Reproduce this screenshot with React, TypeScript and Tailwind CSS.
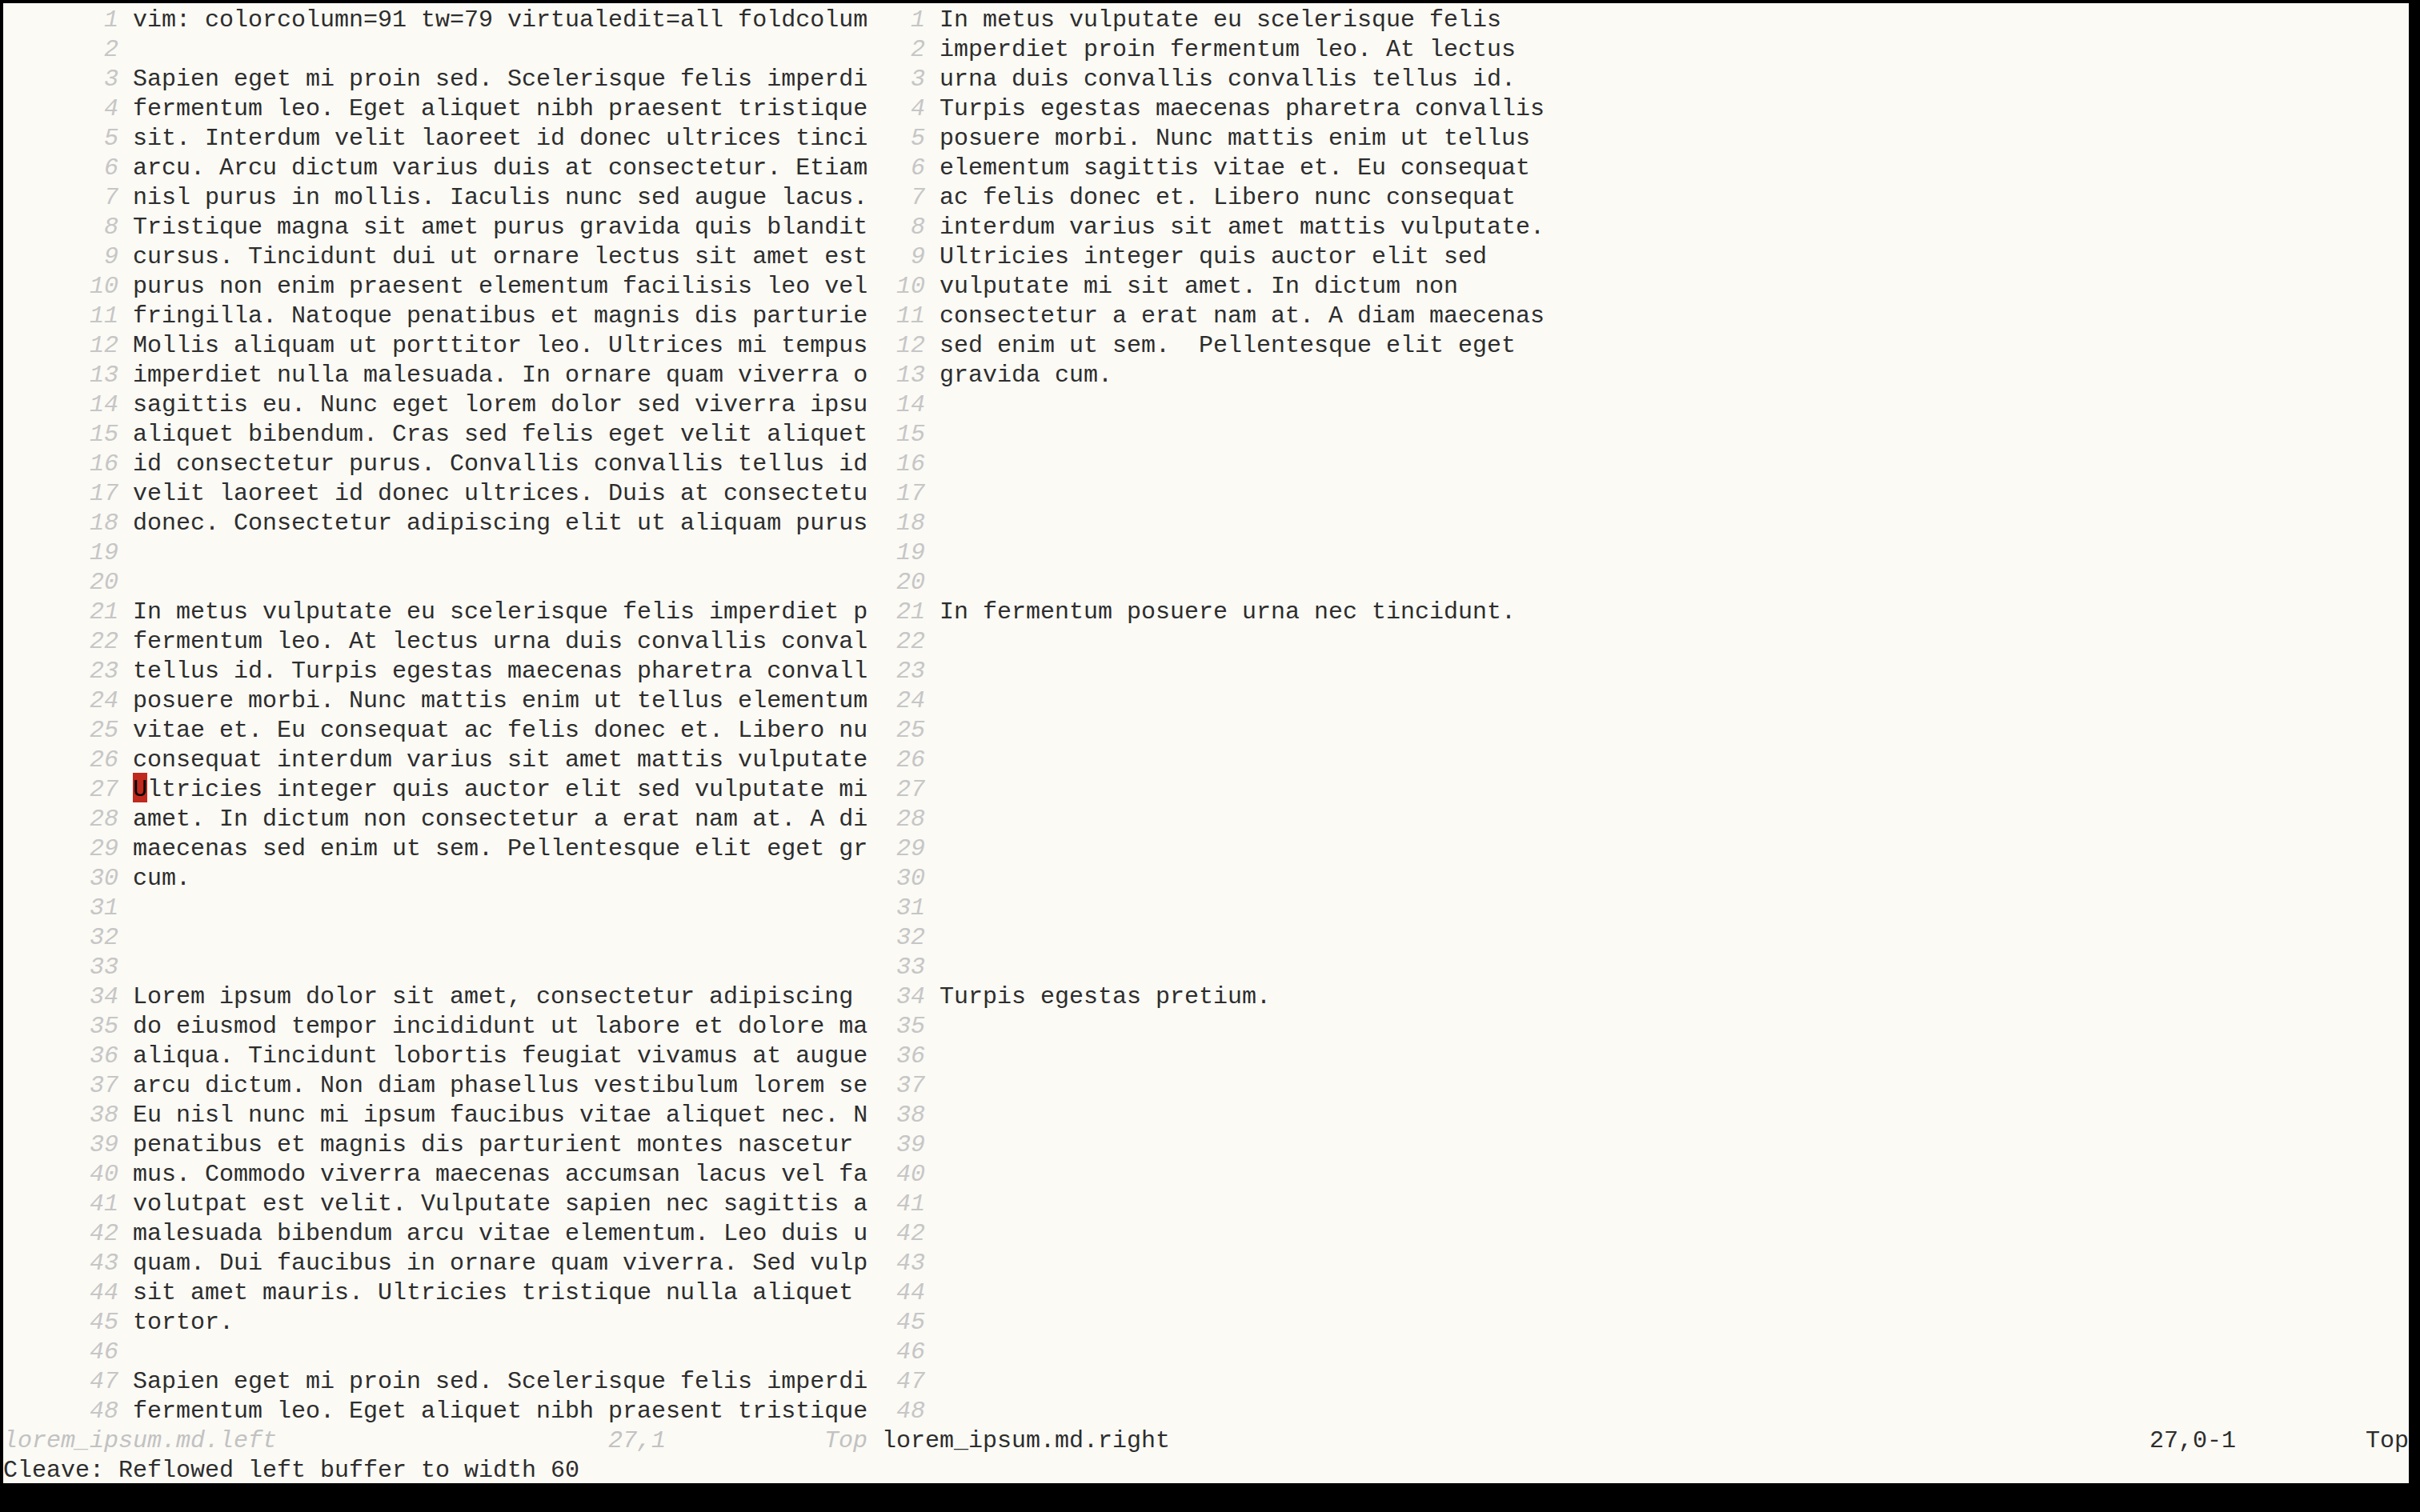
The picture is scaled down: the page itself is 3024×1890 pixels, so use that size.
const leftLines: string[] = [
  "vim: colorcolumn=91 tw=79 virtualedit=all foldcolum",
  "",
  "Sapien eget mi proin sed. Scelerisque felis imperdi",
  "fermentum leo. Eget aliquet nibh praesent tristique",
  "sit. Interdum velit laoreet id donec ultrices tinci",
  "arcu. Arcu dictum varius duis at consectetur. Etiam",
  "nisl purus in mollis. Iaculis nunc sed augue lacus.",
  "Tristique magna sit amet purus gravida quis blandit",
  "cursus. Tincidunt dui ut ornare lectus sit amet est",
  "purus non enim praesent elementum facilisis leo vel",
  "fringilla. Natoque penatibus et magnis dis parturie",
  "Mollis aliquam ut porttitor leo. Ultrices mi tempus",
  "imperdiet nulla malesuada. In ornare quam viverra o",
  "sagittis eu. Nunc eget lorem dolor sed viverra ipsu",
  "aliquet bibendum. Cras sed felis eget velit aliquet",
  "id consectetur purus. Convallis convallis tellus id",
  "velit laoreet id donec ultrices. Duis at consectetu",
  "donec. Consectetur adipiscing elit ut aliquam purus",
  "",
  "",
  "In metus vulputate eu scelerisque felis imperdiet p",
  "fermentum leo. At lectus urna duis convallis conval",
  "tellus id. Turpis egestas maecenas pharetra convall",
  "posuere morbi. Nunc mattis enim ut tellus elementum",
  "vitae et. Eu consequat ac felis donec et. Libero nu",
  "consequat interdum varius sit amet mattis vulputate",
  "Ultricies integer quis auctor elit sed vulputate mi",
  "amet. In dictum non consectetur a erat nam at. A di",
  "maecenas sed enim ut sem. Pellentesque elit eget gr",
  "cum.",
  "",
  "",
  "",
  "Lorem ipsum dolor sit amet, consectetur adipiscing",
  "do eiusmod tempor incididunt ut labore et dolore ma",
  "aliqua. Tincidunt lobortis feugiat vivamus at augue",
  "arcu dictum. Non diam phasellus vestibulum lorem se",
  "Eu nisl nunc mi ipsum faucibus vitae aliquet nec. N",
  "penatibus et magnis dis parturient montes nascetur",
  "mus. Commodo viverra maecenas accumsan lacus vel fa",
  "volutpat est velit. Vulputate sapien nec sagittis a",
  "malesuada bibendum arcu vitae elementum. Leo duis u",
  "quam. Dui faucibus in ornare quam viverra. Sed vulp",
  "sit amet mauris. Ultricies tristique nulla aliquet",
  "tortor.",
  "",
  "Sapien eget mi proin sed. Scelerisque felis imperdi",
  "fermentum leo. Eget aliquet nibh praesent tristique",
];

const rightText: Record<number, string> = {
  1: "In metus vulputate eu scelerisque felis",
  2: "imperdiet proin fermentum leo. At lectus",
  3: "urna duis convallis convallis tellus id.",
  4: "Turpis egestas maecenas pharetra convallis",
  5: "posuere morbi. Nunc mattis enim ut tellus",
  6: "elementum sagittis vitae et. Eu consequat",
  7: "ac felis donec et. Libero nunc consequat",
  8: "interdum varius sit amet mattis vulputate.",
  9: "Ultricies integer quis auctor elit sed",
  10: "vulputate mi sit amet. In dictum non",
  11: "consectetur a erat nam at. A diam maecenas",
  12: "sed enim ut sem.  Pellentesque elit eget",
  13: "gravida cum.",
  21: "In fermentum posuere urna nec tincidunt.",
  34: "Turpis egestas pretium.",
};

const CURSOR_LINE = 27;

// every row is one terminal cell high (37px); the taller line box nudges glyphs down a little
const row = "flex h-[37px] items-start overflow-hidden leading-[43px]";

function LeftRow({ n, text }: { n: number; text: string }) {
  const isCursor = n === CURSOR_LINE;
  return (
    <div className={row}>
      <span className="w-[144px] shrink-0 text-right italic text-[#c6c6c6]">{n}</span>
      <span className="w-[18px] shrink-0" />
      <span className="w-[918px] shrink-0 overflow-hidden whitespace-pre">
        {isCursor ? (
          <>
            <span className="inline-block h-[37px] w-[18px] bg-[#c0291e] align-top leading-[43px] text-black">
              {text[0]}
            </span>
            {text.slice(1)}
          </>
        ) : (
          text
        )}
      </span>
    </div>
  );
}

function RightRow({ n, text }: { n: number; text: string }) {
  return (
    <div className={row}>
      <span className="w-[54px] shrink-0 text-right italic text-[#c6c6c6]">{n}</span>
      <span className="w-[18px] shrink-0" />
      <span className="flex-1 overflow-hidden whitespace-pre">{text}</span>
    </div>
  );
}

export default function App() {
  return (
    <div className="h-[1890px] w-[3024px] bg-black pl-[4px] pt-[4px]">
      <div
        className="flex h-[1850px] w-[3006px] flex-col bg-[#fbfaf5] text-[30px] text-[#2d2d2d]"
        style={{ fontFamily: '"Liberation Mono", "DejaVu Sans Mono", monospace' }}
      >
        <div className="flex">
          <div className="flex w-[1080px] shrink-0 flex-col">
            {leftLines.map((t, i) => (
              <LeftRow key={i} n={i + 1} text={t} />
            ))}
          </div>
          <div className="w-[18px] shrink-0" />
          <div className="flex flex-1 flex-col">
            {leftLines.map((_, i) => (
              <RightRow key={i} n={i + 1} text={rightText[i + 1] ?? ""} />
            ))}
          </div>
        </div>

        {/* status lines */}
        <div className={`${row} whitespace-pre`}>
          <div className="flex w-[1080px] shrink-0 italic text-[#c2c2c2]">
            <span className="w-[756px] shrink-0">lorem_ipsum.md.left</span>
            <span className="w-[270px] shrink-0">27,1</span>
            <span>Top</span>
          </div>
          <div className="w-[18px] shrink-0" />
          <div className="flex flex-1">
            <span className="w-[1584px] shrink-0">lorem_ipsum.md.right</span>
            <span className="w-[270px] shrink-0">27,0-1</span>
            <span>Top</span>
          </div>
        </div>

        <div className={`${row} whitespace-pre`}>Cleave: Reflowed left buffer to width 60</div>
      </div>
    </div>
  );
}
